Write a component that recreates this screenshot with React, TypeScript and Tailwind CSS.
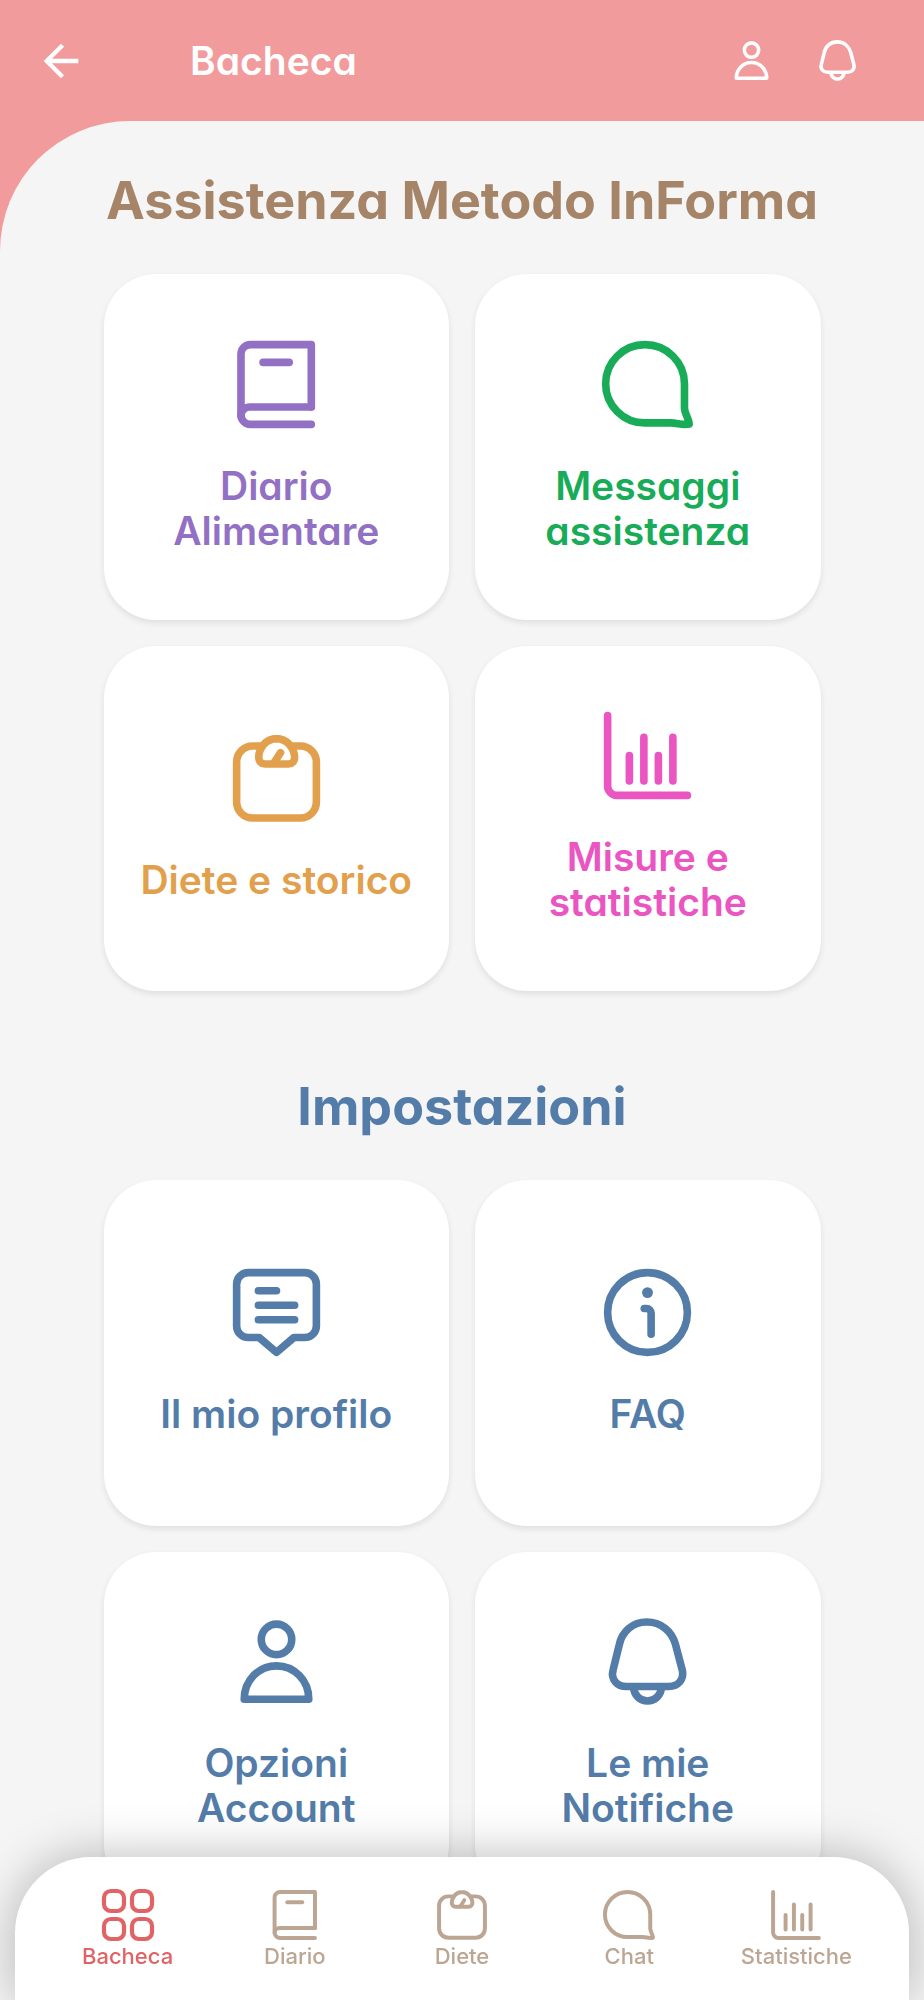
import type { ReactNode } from 'react';
import { MdArrowBack } from 'react-icons/md';

type IconProps = { className?: string; strokeWidth?: number };

function Icon({ className, strokeWidth = 2.1, children, box = '0 0 24 24' }: IconProps & { children: ReactNode; box?: string }) {
  return (
    <svg
      viewBox={box}
      className={`shrink-0 overflow-visible ${className ?? ''}`}
      fill="none"
      stroke="currentColor"
      strokeWidth={strokeWidth}
      strokeLinecap="round"
      strokeLinejoin="round"
      aria-hidden="true"
    >
      {children}
    </svg>
  );
}

function BookIcon(props: IconProps) {
  return (
    <Icon {...props}>
      <path d="M21.6 18.2V1H4.8A2.6 2.6 0 0 0 2.2 3.6V20.4A2.6 2.6 0 0 0 4.8 23H21.6" />
      <path d="M21.6 18.2H4.6A2.4 2.4 0 0 0 2.2 20.6" />
      <path d="M8.3 5.9H15.5" />
    </Icon>
  );
}

function BubbleIcon(props: IconProps) {
  return (
    <Icon {...props}>
      <path d="M11.3 1A10.9 10.8 0 0 1 22.2 11.8V18.5C22.2 20 23.4 21.3 23.5 22.9C21.7 23.3 20.2 22.6 18.4 22.6H11.3A10.85 10.8 0 0 1 .45 11.8A10.85 10.8 0 0 1 11.3 1Z" />
    </Icon>
  );
}

function ScaleIcon(props: IconProps) {
  return (
    <Icon {...props}>
      <path d="M8 3.05H5.4A4.4 4.4 0 0 0 1 7.45V18.5A4.4 4.4 0 0 0 5.4 22.9H18.6A4.4 4.4 0 0 0 23 18.5V7.45A4.4 4.4 0 0 0 18.6 3.05H16" />
      <path d="M12 1C9.2 1 7.1 3.5 7.1 6.2C7.1 7.3 7.9 8 8.8 8H15.3C16.2 8 17 7.3 17 6.2C16.9 3.5 14.8 1 12 1Z" />
      <path d="M11.3 7.7L13.1 4.9" />
    </Icon>
  );
}

function ChartIcon(props: IconProps) {
  return (
    <Icon {...props}>
      <path d="M1 1V20.4A2.6 2.6 0 0 0 3.6 23H23" />
      <path d="M7 12V19M11 7V19M15 12V19M19 7V19" />
    </Icon>
  );
}

function ProfileIcon(props: IconProps) {
  return (
    <Icon {...props}>
      <path d="M4.2 1H19.8A3.2 3.2 0 0 1 23 4.2V15.7A3.2 3.2 0 0 1 19.8 18.9H16.8L12 23L7.2 18.9H4.2A3.2 3.2 0 0 1 1 15.7V4.2A3.2 3.2 0 0 1 4.2 1Z" />
      <path d="M7 6H12M7 10H17M7 14H17" />
    </Icon>
  );
}

function InfoIcon(props: IconProps) {
  return (
    <Icon {...props}>
      <circle cx="12" cy="12" r="11" />
      <circle cx="12" cy="6.5" r="1.5" fill="currentColor" stroke="none" />
      <path d="M11.1 10.9H11.7A1.3 1.3 0 0 1 13 12.2V18" />
    </Icon>
  );
}

function PersonIcon(props: IconProps) {
  return (
    <Icon {...props}>
      <circle cx="12" cy="5.9" r="4.2" />
      <path d="M12 13.2C7.1 13.2 3.1 17.2 3.1 22.4H20.9C20.9 17.2 16.9 13.2 12 13.2Z" />
    </Icon>
  );
}

function BellIcon(props: IconProps) {
  return (
    <Icon {...props}>
      <path d="M11.8 1.1C7.9 1.1 5 3.7 4.2 7.4L2.5 14.4C1.8 17 3.7 18.9 6.2 18.9H17.9C20.4 18.9 22.2 17 21.6 14.4L19.7 7.2C18.7 3.6 15.7 1.1 11.8 1.1Z" />
      <path d="M8.2 19.1A3.8 3.8 0 0 0 15.8 19.1" />
    </Icon>
  );
}

function GridIcon({ className }: IconProps) {
  return (
    <Icon className={className} box="0 0 26 26">
      <rect x="1" y="1" width="10" height="10" rx="3.4" />
      <rect x="15" y="1" width="10" height="10" rx="3.4" />
      <rect x="1" y="15" width="10" height="10" rx="3.4" />
      <rect x="15" y="15" width="10" height="10" rx="3.4" />
    </Icon>
  );
}

type CardItem = { label: string; icon: (p: IconProps) => ReactNode; color: string };

const assistance: CardItem[] = [
  { label: 'Diario Alimentare', icon: BookIcon, color: 'text-[#9270c4]' },
  { label: 'Messaggi assistenza', icon: BubbleIcon, color: 'text-[#18ac58]' },
  { label: 'Diete e storico', icon: ScaleIcon, color: 'text-[#e3a04c]' },
  { label: 'Misure e statistiche', icon: ChartIcon, color: 'text-[#ea55c1]' },
];

const settings: CardItem[] = [
  { label: 'Il mio profilo', icon: ProfileIcon, color: 'text-[#537ca9]' },
  { label: 'FAQ', icon: InfoIcon, color: 'text-[#537ca9]' },
  { label: 'Opzioni Account', icon: PersonIcon, color: 'text-[#537ca9]' },
  { label: 'Le mie Notifiche', icon: BellIcon, color: 'text-[#537ca9]' },
];

const tabs = [
  { label: 'Bacheca', icon: GridIcon, active: true },
  { label: 'Diario', icon: BookIcon, active: false },
  { label: 'Diete', icon: ScaleIcon, active: false },
  { label: 'Chat', icon: BubbleIcon, active: false },
  { label: 'Statistiche', icon: ChartIcon, active: false },
];

function CardGrid({ items }: { items: CardItem[] }) {
  return (
    <div className="grid grid-cols-2 gap-[26px]">
      {items.map(({ label, icon: CardIcon, color }) => (
        <a
          key={label}
          href="#"
          className={`flex aspect-square flex-col items-center justify-center gap-[35px] rounded-[52px] bg-white px-8 shadow-[0_3px_6px_rgba(0,0,0,0.09)] ${color}`}
        >
          <CardIcon className="size-[87px]" />
          <span className="text-center text-[39px] leading-[45px] font-semibold">{label}</span>
        </a>
      ))}
    </div>
  );
}

export default function App() {
  return (
    <div className="min-h-screen bg-[#f19b9c] font-['Inter',sans-serif] [font-feature-settings:'cv11']">
      <header className="flex h-[121px] items-center pr-[66px] pl-[35px] text-white">
        <button type="button" aria-label="Indietro">
          <MdArrowBack className="size-[52px]" />
        </button>
        <h1 className="ml-[103px] flex-1 text-[39px] leading-[46px] font-semibold">Bacheca</h1>
        <div className="flex items-center gap-[45px]">
          <button type="button" aria-label="Profilo">
            <PersonIcon className="size-[41px]" />
          </button>
          <button type="button" aria-label="Notifiche">
            <BellIcon className="size-[41px]" />
          </button>
        </div>
      </header>

      <main className="min-h-[calc(100vh-121px)] rounded-tl-[130px] bg-[#f5f5f5] px-6 pt-[50px] pb-24">
        <div className="mx-auto max-w-[717px]">
          <section>
            <h2 className="mb-[43px] text-center text-[52px] leading-[60px] font-bold whitespace-nowrap text-[#a58468]">
              Assistenza Metodo InForma
            </h2>
            <CardGrid items={assistance} />
          </section>
          <section className="mt-[86px]">
            <h2 className="mb-[43px] text-center text-[52px] leading-[60px] font-bold text-[#537ca9]">Impostazioni</h2>
            <CardGrid items={settings} />
          </section>
        </div>
      </main>

      <nav className="fixed inset-x-[15px] bottom-0 grid h-[143px] grid-cols-5 rounded-t-[76px] bg-white px-[29px] pt-8 shadow-[0_0_50px_rgba(0,0,0,0.28)] [font-feature-settings:normal]">
        {tabs.map(({ label, icon: TabIcon, active }) => (
          <a
            key={label}
            href="#"
            aria-current={active ? 'page' : undefined}
            className={`flex flex-col items-center gap-[2px] ${active ? 'text-[#e06466]' : 'text-[#bca693]'}`}
          >
            <TabIcon className={active ? 'size-[52px]' : 'my-px size-[50px]'} strokeWidth={1.9} />
            <span className="text-[22px] leading-[26px] font-medium">{label}</span>
          </a>
        ))}
      </nav>
    </div>
  );
}
